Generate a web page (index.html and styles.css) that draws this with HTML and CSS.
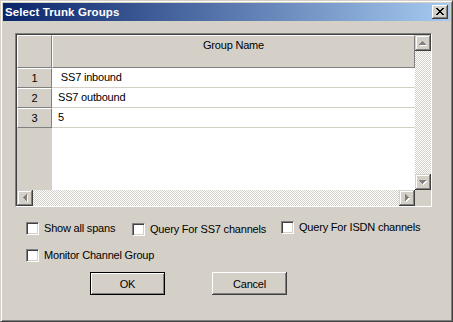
FILE: index.html
```html
<!DOCTYPE html>
<html>
<head>
<meta charset="utf-8">
<link rel="stylesheet" href="styles.css">
</head>
<body>
<div class="window">
  <div class="titlebar">
    <span class="title">Select Trunk Groups</span>
    <div class="close-btn">
      <svg width="8" height="7" viewBox="0 0 8 7" shape-rendering="crispEdges"><path fill="#000" d="M0 0h2v1H0z M6 0h2v1H6z M1 1h2v1H1z M5 1h2v1H5z M2 2h4v1H2z M3 3h2v1H3z M2 4h4v1H2z M1 5h2v1H1z M5 5h2v1H5z M0 6h2v1H0z M6 6h2v1H6z"/></svg>
    </div>
  </div>
  <div class="content">
    <div class="frame">
      <div class="frame-inner">
        <div class="grid-main">
          <div class="cells">
            <div class="hdr corner"></div>
            <div class="hdr colhdr">Group Name</div>
            <div class="hdr rowhdr">1</div>
            <div class="cell"> SS7 inbound</div>
            <div class="hdr rowhdr">2</div>
            <div class="cell">SS7 outbound</div>
            <div class="hdr rowhdr">3</div>
            <div class="cell">5</div>
            <div class="fill-hdr"></div>
            <div class="fill-cell"></div>
          </div>
          <div class="vscroll">
            <div class="sbtn"><svg width="16" height="16" shape-rendering="crispEdges"><path fill="#fff" d="M8 7h1v1H8z M7 8h3v1H7z M6 9h5v1H6z M5 10h7v1H5z"/><path fill="#808080" d="M7 6h1v1H7z M6 7h3v1H6z M5 8h5v1H5z M4 9h7v1H4z"/></svg></div>
            <div class="track"></div>
            <div class="sbtn"><svg width="16" height="16" shape-rendering="crispEdges"><path fill="#fff" d="M5 7h7v1H5z M6 8h5v1H6z M7 9h3v1H7z M8 10h1v1H8z"/><path fill="#808080" d="M4 6h7v1H4z M5 7h5v1H5z M6 8h3v1H6z M7 9h1v1H7z"/></svg></div>
          </div>
        </div>
        <div class="hscroll">
          <div class="sbtn"><svg width="16" height="16" shape-rendering="crispEdges"><path fill="#fff" d="M7 8h1v1H7z M8 7h1v3H8z M9 6h1v5H9z M10 5h1v7h-1z"/><path fill="#808080" d="M6 7h1v1H6z M7 6h1v3H7z M8 5h1v5H8z M9 4h1v7H9z"/></svg></div>
          <div class="track"></div>
          <div class="sbtn"><svg width="16" height="16" shape-rendering="crispEdges"><path fill="#fff" d="M7 5h1v7H7z M8 6h1v5H8z M9 7h1v3H9z M10 8h1v1h-1z"/><path fill="#808080" d="M6 4h1v7H6z M7 5h1v5H7z M8 6h1v3H8z M9 7h1v1H9z"/></svg></div>
          <div class="scorner"></div>
        </div>
      </div>
    </div>

    <div class="chk-row first">
      <label class="chk w1 off1"><span class="box"></span><span>Show all spans</span></label>
      <label class="chk w2 off2"><span class="box"></span><span>Query For SS7 channels</span></label>
      <label class="chk"><span class="box"></span><span>Query For ISDN channels</span></label>
    </div>
    <div class="chk-row second">
      <label class="chk"><span class="box"></span><span>Monitor Channel Group</span></label>
    </div>

    <div class="btn-row">
      <div class="btn default">OK</div>
      <div class="btn">Cancel</div>
    </div>
  </div>
</div>
</body>
</html>
```

FILE: styles.css
```css
* { box-sizing: border-box; margin: 0; padding: 0; }
html, body { width: 453px; height: 322px; overflow: hidden; }
body {
  font-family: "Liberation Sans", Arial, sans-serif;
  font-size: 11px;
  letter-spacing: -0.2px;
  color: #000;
  background: #d4d0c8;
}
.window {
  width: 453px;
  height: 322px;
  background: #d4d0c8;
  border: 1px solid;
  border-color: #d4d0c8 #404040 #404040 #d4d0c8;
  box-shadow: inset 1px 1px #fff, inset -1px -1px #808080;
  padding: 2px;
  display: flex;
  flex-direction: column;
}
.titlebar {
  height: 18px;
  flex: none;
  background: linear-gradient(to right, #0a246a, #a6caf0);
  display: flex;
  align-items: center;
  justify-content: space-between;
  padding: 0 2px;
}
.title {
  color: #fff;
  font-weight: bold;
  font-size: 11.5px;
  letter-spacing: 0.1px;
  line-height: 14px;
}
.close-btn {
  width: 16px;
  height: 14px;
  background: #d4d0c8;
  box-shadow: inset -1px -1px #404040, inset 1px 1px #fff, inset -2px -2px #808080;
  display: flex;
  align-items: flex-start;
  padding: 3px 0 0 4px;
}
.close-btn svg { display: block; }

.content { padding: 12px 0 0 12px; display: flex; flex-direction: column; }

.frame {
  width: 417px;
  height: 174px;
  border: 1px solid;
  border-color: #808080 #fff #fff #808080;
}
.frame-inner {
  height: 100%;
  border-top: 1px solid #404040;
  border-left: 1px solid #404040;
  display: flex;
  flex-direction: column;
}
.grid-main { display: flex; height: 155px; }
.cells {
  width: 398px;
  display: grid;
  grid-template-columns: 35px 1fr;
  grid-template-rows: 33px 20px 20px 20px 1fr;
  background: #fff;
}
.hdr {
  background: #d4d0c8;
  border-top: 1px solid #fff;
  border-left: 1px solid #fff;
  border-right: 1px solid #808080;
  border-bottom: 1px solid #808080;
}
.colhdr {
  text-align: center;
  line-height: 14px;
  padding-top: 2px;
}
.rowhdr {
  text-align: center;
  line-height: 18px;
}
.cell {
  white-space: pre;
  border-bottom: 1px solid #d4d0c8;
  padding-left: 6px;
  line-height: 19px;
}
.fill-hdr { background: #d4d0c8; }
.fill-cell { background: #fff; }

.vscroll { width: 16px; display: flex; flex-direction: column; }
.hscroll { height: 16px; display: flex; }
.sbtn {
  width: 16px;
  height: 16px;
  flex: none;
  background: #d4d0c8;
  box-shadow: inset -1px -1px #404040, inset 1px 1px #d4d0c8, inset -2px -2px #808080, inset 2px 2px #fff;
}
.sbtn svg { display: block; }
.track {
  flex: 1;
  background: repeating-conic-gradient(#d4d0c8 0 25%, #fff 0 50%) 0 0 / 2px 2px;
}
.scorner { width: 16px; flex: none; background: #d4d0c8; }

.chk-row { display: flex; align-items: flex-start; padding-left: 11px; }
.chk-row.first { margin-top: 14px; height: 15px; }
.chk-row.second { margin-top: 13px; height: 13px; }
.chk { display: flex; align-items: center; gap: 5px; height: 13px; line-height: 13px; white-space: nowrap; }
.w1 { width: 106px; }
.w2 { width: 149px; }
.off1 { margin-top: 1px; }
.off2 { margin-top: 2px; }
.box {
  width: 13px;
  height: 13px;
  flex: none;
  background: #fff;
  border: 1px solid;
  border-color: #808080 #fff #fff #808080;
  box-shadow: inset 1px 1px #404040, inset -1px -1px #d4d0c8;
}

.btn-row { display: flex; gap: 47px; padding-left: 75px; margin-top: 10px; }
.btn {
  width: 75px;
  height: 23px;
  background: #d4d0c8;
  box-shadow: inset -1px -1px #404040, inset 1px 1px #fff, inset -2px -2px #808080;
  display: flex;
  align-items: center;
  justify-content: center;
}
.btn.default {
  border: 1px solid #000;
  box-shadow: inset 1px 1px #fff, inset -1px -1px #808080;
}
```
